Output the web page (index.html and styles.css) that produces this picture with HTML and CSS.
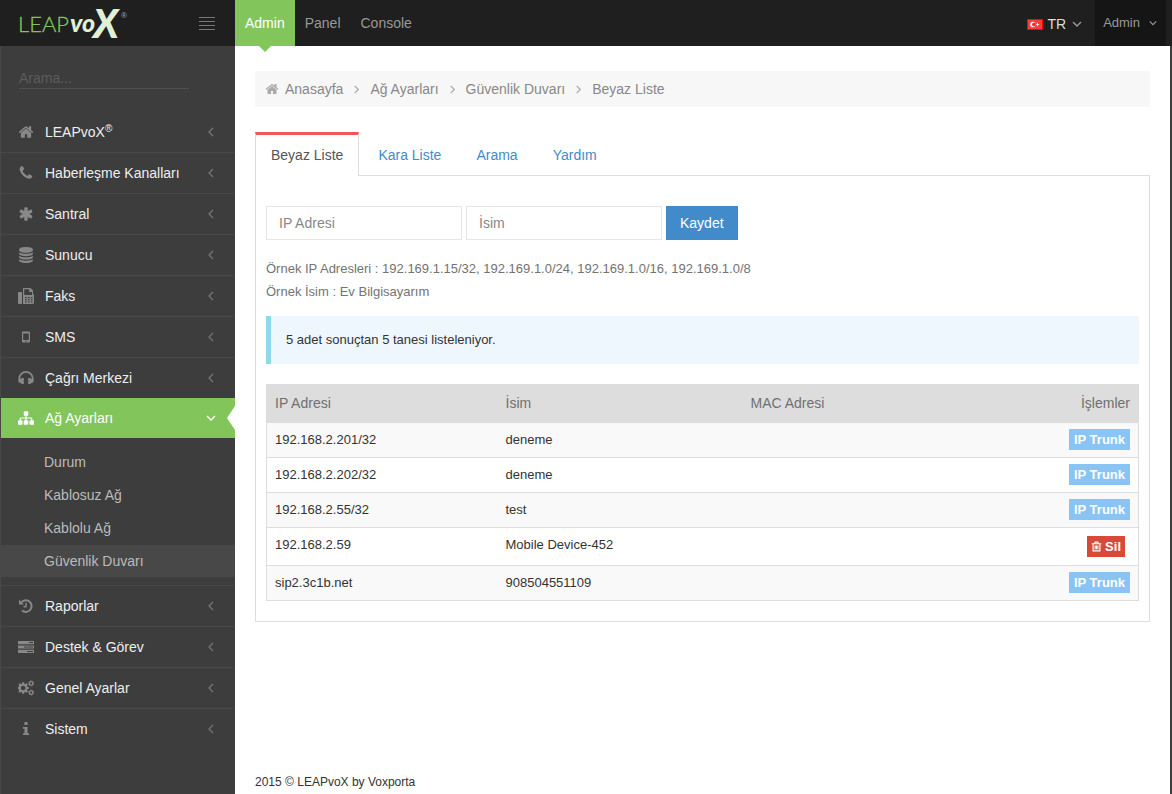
FILE: index.html
```html
<!DOCTYPE html>
<html lang="tr">
<head>
<meta charset="utf-8">
<title>LEAPvoX - Beyaz Liste</title>
<meta name="viewport" content="width=device-width, initial-scale=1">
<link rel="stylesheet" href="styles.css">
</head>
<body>
<svg class="sprite" aria-hidden="true">
  <symbol id="home" viewBox="0 0 1792 1792"><path d="M1472 992v480q0 26-19 45t-45 19h-384v-384h-256v384h-384q-26 0-45-19t-19-45v-480q0-1 .5-3t.5-3l575-474 575 474q1 2 1 6zm223-69l-62 74q-8 9-21 11h-3q-13 0-21-7l-692-577-692 577q-12 8-24 7-13-2-21-11l-62-74q-8-10-7-23.500t11-21.500l719-599q32-26 76-26t76 26l244 204v-195q0-14 9-23t23-9h192q14 0 23 9t9 23v408l219 182q10 8 11 21.500t-7 23.500z"/></symbol>
  <symbol id="phone" viewBox="0 0 1792 1792"><path d="M1600 1240q0 27-10 70.500t-21 68.500q-21 50-122 106-94 51-186 51-27 0-53-3.500t-57.500-12.500-47-14.500-55.500-20.500-49-18q-98-35-175-83-127-79-264-216t-216-264q-48-77-83-175-3-9-18-49t-20.500-55.500-14.500-47-12.500-57.500-3.500-53q0-92 51-186 56-101 106-122 25-11 68.500-21t70.500-10q14 0 21 3 18 6 53 76 11 19 30 54t35 63.500 31 53.500q3 4 17.500 25t21.500 35.500 7 28.500q0 20-28.500 50t-62 55-62 53-28.500 46q0 9 5 22.500t8.500 20.500 14 24 11.500 19q76 137 174 235t235 174q2 1 19 11.500t24 14 20.500 8.500 22.500 5q18 0 46-28.500t53-62 55-62 50-28.500q14 0 28.500 7t35.500 21.500 25 17.500q25 15 53.500 31t63.500 35 54 30q70 35 76 53 3 7 3 21z"/></symbol>
  <symbol id="asterisk" viewBox="0 0 1792 1792"><path d="M1546 1050q46 26 59.500 77.500t-12.500 97.500l-64 110q-26 46-77.500 59.500t-97.500-12.500l-266-153v307q0 52-38 90t-90 38h-128q-52 0-90-38t-38-90v-307l-266 153q-46 26-97.500 12.500t-77.500-59.500l-64-110q-26-46-12.500-97.500t59.500-77.500l266-154-266-154q-46-26-59.500-77.500t12.500-97.500l64-110q26-46 77.500-59.500t97.500 12.500l266 153v-307q0-52 38-90t90-38h128q52 0 90 38t38 90v307l266-153q46-26 97.500-12.500t77.500 59.500l64 110q26 46 12.500 97.500t-59.500 77.500l-266 154z"/></symbol>
  <symbol id="database" viewBox="0 0 1792 1792"><path d="M896 768q237 0 443-43t325-127v170q0 69-103 128t-280 93.500-385 34.500-385-34.500-280-93.500-103-128v-170q119 84 325 127t443 43zm0 768q237 0 443-43t325-127v170q0 69-103 128t-280 93.500-385 34.500-385-34.500-280-93.500-103-128v-170q119 84 325 127t443 43zm0-384q237 0 443-43t325-127v170q0 69-103 128t-280 93.500-385 34.500-385-34.500-280-93.500-103-128v-170q119 84 325 127t443 43zm0-1152q208 0 385 34.500t280 93.500 103 128v128q0 69-103 128t-280 93.500-385 34.500-385-34.500-280-93.500-103-128v-128q0-69 103-128t280-93.500 385-34.500z"/></symbol>
  <symbol id="fax" viewBox="0 0 16 16"><rect x="0" y="4" width="4" height="12" rx="1"/><path fill-rule="evenodd" d="M5 0h7.500L15 2.500V6q1 .4 1 1.300V14.500q0 1.500-1.500 1.500H5zM6.200 1.200V7H14V4h-2.800V1.200zM7 9v1.200h1.800V9zm2.900 0v1.200h1.800V9zm2.900 0v1.200h1.700V9zM7 11.200v1.200h1.800v-1.200zm2.900 0v1.200h1.800v-1.200zm2.900 0v1.200h1.700v-1.200zM7 13.400v1.200h1.800v-1.200zm2.900 0v1.200h1.800v-1.200zm2.900 0v1.200h1.700v-1.200z"/></symbol>
  <symbol id="mobile" viewBox="0 0 16 16"><path fill-rule="evenodd" d="M5 2.500h6q1 0 1 1v9q0 1-1 1H5q-1 0-1-1v-9q0-1 1-1zM5.200 4.500v6.500h5.600V4.500zM7.300 11.700v1h1.400v-1z"/></symbol>
  <symbol id="headphones" viewBox="0 0 16 16"><path d="M1.300 11V8.600a6.700 6.700 0 0 1 13.400 0V11" fill="none" stroke="currentColor" stroke-width="1.700"/><path d="M.6 9.500 4.300 8h1.500v6H4.300L.6 12.200zM15.400 9.500 11.700 8h-1.500v6h1.500l3.700-1.800z"/></symbol>
  <symbol id="sitemap" viewBox="0 0 1792 1792"><path d="M1792 1248v320q0 40-28 68t-68 28h-320q-40 0-68-28t-28-68v-320q0-40 28-68t68-28h96v-192h-512v192h96q40 0 68 28t28 68v320q0 40-28 68t-68 28h-320q-40 0-68-28t-28-68v-320q0-40 28-68t68-28h96v-192h-512v192h96q40 0 68 28t28 68v320q0 40-28 68t-68 28h-320q-40 0-68-28t-28-68v-320q0-40 28-68t68-28h96v-192q0-52 38-90t90-38h512v-192h-96q-40 0-68-28t-28-68v-320q0-40 28-68t68-28h320q40 0 68 28t28 68v320q0 40-28 68t-68 28h-96v192h512q52 0 90 38t38 90v192h96q40 0 68 28t28 68z"/></symbol>
  <symbol id="history" viewBox="0 0 16 16"><path d="M3.500 4.200A5.800 5.800 0 1 1 4 12.500" fill="none" stroke="currentColor" stroke-width="2"/><path d="M1 1.500 6 6.600H1zM7.300 4.800h1.400v4.600H5.500V8.100h1.800z"/></symbol>
  <symbol id="tasks" viewBox="0 0 16 16"><path fill-rule="evenodd" d="M0 2h16v3.200H0zM11 3.100v1h4v-1zM0 6.400h16v3.200H0zM6 7.500v1h9v-1zM0 10.800h16V14H0zM9 11.900v1h6v-1z"/></symbol>
  <symbol id="cogs" viewBox="0 0 1792 1792"><path d="M832 896q0-106-75-181t-181-75-181 75-75 181 75 181 181 75 181-75 75-181zm384-91v185q0 10-7 19.500t-16 10.500l-155 24q-11 35-32 76 34 48 90 115 7 11 7 20 0 12-7 19-23 30-82.500 89.500t-78.500 59.500q-11 0-21-7l-115-90q-37 19-77 31-11 108-23 155-7 24-30 24h-186q-11 0-20-7.500t-10-17.500l-23-153q-34-10-75-31l-118 89q-7 7-20 7-11 0-21-8-144-133-144-160 0-9 7-19 10-14 41-53t47-61q-23-44-35-82l-152-24q-10-1-17-9.500t-7-19.500v-185q0-10 7-19.500t16-10.500l155-24q11-35 32-76-34-48-90-115-7-11-7-20 0-12 7-20 22-30 82-89t79-59q11 0 21 7l115 90q34-18 77-32 11-108 23-154 7-24 30-24h186q11 0 20 7.500t10 17.500l23 153q34 10 75 31l118-89q8-7 20-7 11 0 21 8 144 133 144 160 0 8-7 19-12 16-42 54t-45 60q23 48 34 82l152 23q10 2 17 10.500t7 19.500z" fill-rule="evenodd"/><g fill="none" stroke="currentColor"><circle cx="1472" cy="384" r="200" stroke-width="145"/><circle cx="1472" cy="1408" r="200" stroke-width="145"/><circle cx="1472" cy="384" r="295" stroke-width="100" stroke-dasharray="154 155"/><circle cx="1472" cy="1408" r="295" stroke-width="100" stroke-dasharray="154 155"/></g></symbol>
  <symbol id="info" viewBox="0 0 16 16"><path d="M6.500 1h3v3h-3zM5 6h4.500v6.300H11V14H5v-1.700h1.500V7.700H5z"/></symbol>
  <symbol id="trash" viewBox="0 0 16 16"><path d="M1 4h14M5 4l1-2.300h4L11 4M3 4v10.300h10V4M6 6.500v5.500M8 6.500v5.500M10 6.500v5.500" fill="none" stroke="currentColor" stroke-width="1.600"/></symbol>
  <symbol id="left" viewBox="0 0 10 10"><path d="M7 1 3 5l4 4" fill="none" stroke="currentColor" stroke-width="1.200"/></symbol>
  <symbol id="right" viewBox="0 0 10 10"><path d="M3 1l4 4-4 4" fill="none" stroke="currentColor" stroke-width="1.400"/></symbol>
  <symbol id="down" viewBox="0 0 10 10"><path d="M1 3l4 4 4-4" fill="none" stroke="currentColor" stroke-width="1.400"/></symbol>
</svg>

<header class="topbar">
  <div class="brand">
    <a href="#" aria-label="LEAPvoX">
      <svg class="logo" viewBox="0 0 110 40">
        <text class="logo-leap" x="-1" y="29">LEAP</text>
        <text class="logo-vo" x="51" y="29">vo</text>
        <text class="logo-x" x="74" y="35">X</text>
        <text class="logo-r" x="102" y="15">®</text>
      </svg>
    </a>
    <button class="toggler" type="button" aria-label="Menü"><span></span><span></span><span></span><span></span></button>
  </div>
  <nav class="topnav">
    <a class="current" href="#">Admin</a>
    <a href="#">Panel</a>
    <a href="#">Console</a>
  </nav>
  <a class="lang" href="#">
    <svg class="flag" viewBox="0 0 16 11"><rect width="16" height="11" fill="#f00"/><rect x="1" y="1" width="14" height="9" fill="#fa3c3c"/><circle cx="6" cy="5.500" r="2.800" fill="#fff"/><circle cx="7" cy="5.500" r="1.900" fill="#fa2222"/><path d="M8.500 5.500 10 5l.5-1.500.7 1.400 1.500.6-1.500.6-.7 1.400L10 6z" fill="#fff"/></svg>
    <span>TR</span>
    <svg class="chev"><use href="#down"/></svg>
  </a>
  <a class="user" href="#"><span>Admin</span><svg class="chev"><use href="#down"/></svg></a>
</header>

<div class="layout">
  <aside class="sidebar">
    <form class="search"><input type="search" placeholder="Arama..." aria-label="Arama"></form>
    <ul class="menu">
      <li><a href="#"><svg class="icon"><use href="#home"/></svg><span>LEAPvoX<sup>®</sup></span><svg class="arrow"><use href="#left"/></svg></a></li>
      <li><a href="#"><svg class="icon"><use href="#phone"/></svg><span>Haberleşme Kanalları</span><svg class="arrow"><use href="#left"/></svg></a></li>
      <li><a href="#"><svg class="icon"><use href="#asterisk"/></svg><span>Santral</span><svg class="arrow"><use href="#left"/></svg></a></li>
      <li><a href="#"><svg class="icon"><use href="#database"/></svg><span>Sunucu</span><svg class="arrow"><use href="#left"/></svg></a></li>
      <li><a href="#"><svg class="icon"><use href="#fax"/></svg><span>Faks</span><svg class="arrow"><use href="#left"/></svg></a></li>
      <li><a href="#"><svg class="icon"><use href="#mobile"/></svg><span>SMS</span><svg class="arrow"><use href="#left"/></svg></a></li>
      <li><a href="#"><svg class="icon"><use href="#headphones"/></svg><span>Çağrı Merkezi</span><svg class="arrow"><use href="#left"/></svg></a></li>
      <li class="active"><a href="#"><svg class="icon"><use href="#sitemap"/></svg><span>Ağ Ayarları</span><svg class="arrow"><use href="#down"/></svg></a>
        <ul class="submenu">
          <li><a href="#">Durum</a></li>
          <li><a href="#">Kablosuz Ağ</a></li>
          <li><a href="#">Kablolu Ağ</a></li>
          <li><a class="selected" href="#">Güvenlik Duvarı</a></li>
        </ul>
      </li>
      <li><a href="#"><svg class="icon"><use href="#history"/></svg><span>Raporlar</span><svg class="arrow"><use href="#left"/></svg></a></li>
      <li><a href="#"><svg class="icon"><use href="#tasks"/></svg><span>Destek &amp; Görev</span><svg class="arrow"><use href="#left"/></svg></a></li>
      <li><a href="#"><svg class="icon"><use href="#cogs"/></svg><span>Genel Ayarlar</span><svg class="arrow"><use href="#left"/></svg></a></li>
      <li><a href="#"><svg class="icon"><use href="#info"/></svg><span>Sistem</span><svg class="arrow"><use href="#left"/></svg></a></li>
    </ul>
  </aside>

  <main class="content">
    <nav class="breadcrumb">
      <svg class="crumb-home"><use href="#home"/></svg>
      <a href="#">Anasayfa</a><svg class="sep"><use href="#right"/></svg>
      <a href="#">Ağ Ayarları</a><svg class="sep"><use href="#right"/></svg>
      <a href="#">Güvenlik Duvarı</a><svg class="sep"><use href="#right"/></svg>
      <a href="#">Beyaz Liste</a>
    </nav>

    <nav class="tabs">
      <a class="active" href="#">Beyaz Liste</a>
      <a href="#">Kara Liste</a>
      <a href="#">Arama</a>
      <a href="#">Yardım</a>
    </nav>

    <section class="panel">
      <form class="add">
        <input type="text" placeholder="IP Adresi" aria-label="IP Adresi">
        <input type="text" placeholder="İsim" aria-label="İsim">
        <button type="button">Kaydet</button>
      </form>
      <p class="help">Örnek IP Adresleri : 192.169.1.15/32, 192.169.1.0/24, 192.169.1.0/16, 192.169.1.0/8<br>Örnek İsim : Ev Bilgisayarım</p>
      <p class="note">5 adet sonuçtan 5 tanesi listeleniyor.</p>
      <table class="list">
        <thead>
          <tr><th class="col-ip">IP Adresi</th><th class="col-name">İsim</th><th>MAC Adresi</th><th class="actions">İşlemler</th></tr>
        </thead>
        <tbody>
          <tr><td>192.168.2.201/32</td><td>deneme</td><td></td><td class="actions"><span class="tag">IP Trunk</span></td></tr>
          <tr><td>192.168.2.202/32</td><td>deneme</td><td></td><td class="actions"><span class="tag">IP Trunk</span></td></tr>
          <tr><td>192.168.2.55/32</td><td>test</td><td></td><td class="actions"><span class="tag">IP Trunk</span></td></tr>
          <tr><td>192.168.2.59</td><td>Mobile Device-452</td><td></td><td class="actions"><button class="delete" type="button"><svg><use href="#trash"/></svg>Sil</button></td></tr>
          <tr><td>sip2.3c1b.net</td><td>908504551109</td><td></td><td class="actions"><span class="tag">IP Trunk</span></td></tr>
        </tbody>
      </table>
    </section>

    <footer class="footer">2015 © LEAPvoX by Voxporta</footer>
  </main>
</div>
</body>
</html>
```

FILE: styles.css
```css
* { box-sizing: border-box; }

body {
  margin: 0;
  min-height: 100vh;
  display: flex;
  flex-direction: column;
  background: #3d3d3d;
  color: #333;
  font: 13px/20px "Liberation Sans", Arial, sans-serif;
}

a { color: inherit; text-decoration: none; }
ul { margin: 0; padding: 0; list-style: none; }
button, input { font-family: inherit; border-radius: 0; }
svg { flex: none; fill: currentColor; }
.sprite { position: absolute; width: 0; height: 0; }

/* Top bar */
.topbar {
  display: flex;
  height: 46px;
  background: #1f1f1f;
  color: #999;
  font-size: 14px;
}
.brand {
  width: 235px;
  padding: 0 20px 0 19px;
  display: flex;
  align-items: center;
  justify-content: space-between;
}
.logo { display: block; width: 110px; height: 40px; overflow: visible; }
.logo-leap { font: 300 22px Lato, sans-serif; fill: #82c55b; stroke: #82c55b; stroke-width: .3px; }
.logo-vo { font: italic 900 25px Lato, sans-serif; fill: #dff0d6; }
.logo-x { font: italic 900 40px Lato, sans-serif; fill: #dff0d6; }
.logo-r { font: 8px "Liberation Sans", sans-serif; fill: #aaa; }
.toggler {
  display: grid;
  gap: 3px;
  width: 16px;
  padding: 0;
  border: 0;
  background: none;
}
.toggler span { height: 1px; background: #777; }
.topnav { flex: 1; display: flex; }
.topnav a { padding: 0 10px; line-height: 46px; }
.topnav .current { position: relative; background: #82c55b; color: #fff; }
.topnav .current::after {
  content: "";
  position: absolute;
  top: 100%;
  left: 50%;
  margin-left: -6px;
  border: 6px solid transparent;
  border-top-color: #82c55b;
  border-bottom: 0;
}
.lang { display: flex; align-items: center; gap: 4px; padding: 2px 13px 0 0; color: #ddd; }
.flag { width: 16px; height: 11px; }
.chev { width: 10px; height: 10px; color: #999; }
.lang .chev { margin-left: 2px; }
.user {
  display: flex;
  align-items: center;
  gap: 9px;
  margin-right: 6px;
  padding: 0 9px 0 8px;
  background: #151515;
  font-size: 13px;
}
.user .chev { width: 8px; height: 8px; }

.layout { flex: 1; display: flex; }

/* Sidebar */
.sidebar { flex: none; width: 235px; border-left: 1px solid #484848; }
.search { padding: 22px 46px 22px 18px; }
.search input {
  display: block;
  width: 100%;
  height: 21px;
  padding: 0 0 1px;
  border: 0;
  border-bottom: 1px solid #4f4f4f;
  background: transparent;
  color: #ccc;
  font-size: 14px;
}
.search input::placeholder { color: #5c5c5c; }
.menu > li { border-top: 1px solid #484848; }
.menu > li:first-child { border-top-color: transparent; }
.menu > li > a {
  display: flex;
  align-items: center;
  gap: 11px;
  height: 40px;
  padding: 0 19px 0 17px;
  color: #eee;
  font-size: 14px;
}
.menu > li > a > span { flex: 1; }
.menu sup { font-size: 10px; line-height: 0; vertical-align: 5px; }
.icon { width: 16px; height: 16px; color: #888; }
.arrow { width: 10px; height: 10px; color: #777; }
.menu > .active { border-top: 0; }
.menu > .active > a { position: relative; background: #82c55b; color: #fff; }
.menu > .active > a .icon, .menu > .active > a .arrow { color: #fff; }
.menu > .active > a::after {
  content: "";
  position: absolute;
  right: 0;
  top: 8px;
  border: 12px solid transparent;
  border-right: 8px solid #fff;
  border-left: 0;
}
.submenu { display: grid; gap: 1px; padding: 8px 0; }
.submenu a { display: block; padding-left: 43px; color: #bbb; font-size: 14px; line-height: 32px; }
.submenu .selected { background: #484848; }

/* Content */
.content {
  flex: 1;
  min-width: 0;
  display: flex;
  flex-direction: column;
  margin-right: 2px;
  padding: 25px 20px 2px;
  background: #fff;
}
.breadcrumb {
  display: flex;
  align-items: center;
  gap: 9px;
  margin-bottom: 25px;
  padding: 0 10px;
  background: #f7f7f7;
  color: #888;
  font-size: 14px;
  line-height: 36px;
}
.crumb-home { width: 14px; height: 14px; color: #aaa; margin-right: -3px; }
.sep { width: 9px; height: 9px; color: #aaa; }

.tabs { display: flex; gap: 3px; color: #428bca; font-size: 14px; }
.tabs a {
  padding: 10px 15px;
  border: 1px solid transparent;
  border-top-width: 3px;
  border-bottom: 0;
  margin-bottom: -1px;
  line-height: 21px;
}
.tabs .active {
  position: relative;
  border-color: #f3565d #ddd;
  background: #fff;
  color: #555;
}
.panel { padding: 30px 10px 20px; border: 1px solid #ddd; }

.add { display: flex; gap: 4px; font-size: 14px; }
.add input {
  width: 196px;
  height: 34px;
  padding: 0 12px;
  border: 1px solid #e5e5e5;
  background: #fff;
  color: #333;
  font-size: 14px;
}
.add input::placeholder { color: #888; }
.add button {
  height: 34px;
  padding: 0 14px;
  border: 0;
  background: #428bca;
  color: #fff;
  font-size: 14px;
}
.help { margin: 17px 0 13px; color: #737373; line-height: 23px; }
.note {
  margin: 0 0 20px;
  padding: 14px 15px;
  border-left: 5px solid #91d9e8;
  background: #eef7fe;
}

.list { width: 100%; border-collapse: collapse; table-layout: fixed; border: 1px solid #ddd; }
.list th {
  height: 38px;
  padding: 0 8px 2px;
  background: #ddd;
  color: #707070;
  font-size: 14px;
  font-weight: 400;
  text-align: left;
}
.list .col-ip { width: 231px; }
.list .col-name { width: 245px; }
.list td { padding: 7px 8px; border-top: 1px solid #ddd; vertical-align: top; }
.list tbody tr:nth-child(odd) { background: #f9f9f9; }
.list .actions { text-align: right; }
.list td.actions { padding-top: 6px; padding-bottom: 7px; }
.tag, .delete { color: #fff; font-size: 13px; font-weight: 700; line-height: 21px; }
.tag { display: block; width: fit-content; margin-left: auto; padding: 0 5px; background: #89c4f4; }
.delete {
  display: flex;
  align-items: center;
  gap: 3px;
  margin: 2px 5px 1px auto;
  padding: 0 4px;
  border: 0;
  background: #d84a38;
}
.delete svg { width: 11px; height: 11px; }

.footer { margin-top: auto; padding-top: 20px; font-size: 12px; }
```
